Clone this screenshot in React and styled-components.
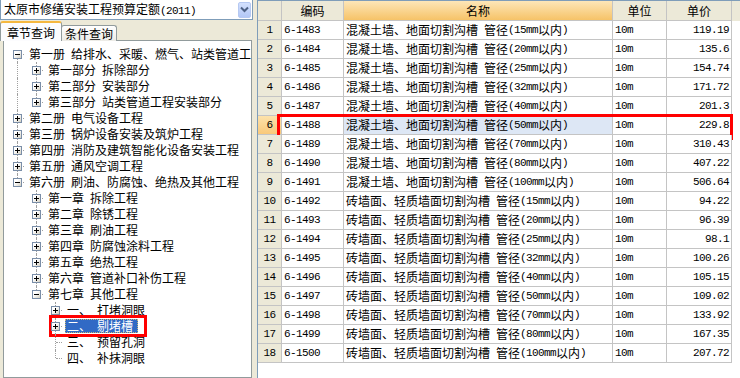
import React from "react";
import styled, { createGlobalStyle, css } from "styled-components";

//Data
const tree = [
	{
		no: "第一册",
		title: "给排水、采暖、燃气、站类管道工程",
		open: true,
		children: [
			{ no: "第一部分", title: "拆除部分", children: [] },
			{ no: "第二部分", title: "安装部分", children: [] },
			{ no: "第三部分", title: "站类管道工程安装部分", children: [] },
		],
	},
	{ no: "第二册", title: "电气设备工程", children: [] },
	{ no: "第三册", title: "锅炉设备安装及筑炉工程", children: [] },
	{ no: "第四册", title: "消防及建筑智能化设备安装工程", children: [] },
	{ no: "第五册", title: "通风空调工程", children: [] },
	{
		no: "第六册",
		title: "刷油、防腐蚀、绝热及其他工程",
		open: true,
		children: [
			{ no: "第一章", title: "拆除工程", children: [] },
			{ no: "第二章", title: "除锈工程", children: [] },
			{ no: "第三章", title: "刷油工程", children: [] },
			{ no: "第四章", title: "防腐蚀涂料工程", children: [] },
			{ no: "第五章", title: "绝热工程", children: [] },
			{ no: "第六章", title: "管道补口补伤工程", children: [] },
			{
				no: "第七章",
				title: "其他工程",
				open: true,
				children: [
					{ no: "一、", title: "打堵洞眼", children: [] },
					{ no: "二、", title: "剔堵槽", children: [], selected: true },
					{ no: "三、", title: "预留孔洞" },
					{ no: "四、", title: "补抹洞眼" },
				],
			},
		],
	},
];

const concrete = "混凝土墙、地面切割沟槽 管径";
const brick = "砖墙面、轻质墙面切割沟槽 管径";
const items = [
	["6-1483", concrete, 15, "119.19"],
	["6-1484", concrete, 20, "135.6"],
	["6-1485", concrete, 25, "154.74"],
	["6-1486", concrete, 32, "171.72"],
	["6-1487", concrete, 40, "201.3"],
	["6-1488", concrete, 50, "229.8"],
	["6-1489", concrete, 70, "310.43"],
	["6-1490", concrete, 80, "407.22"],
	["6-1491", concrete, 100, "506.64"],
	["6-1492", brick, 15, "94.22"],
	["6-1493", brick, 20, "96.39"],
	["6-1494", brick, 25, "98.1"],
	["6-1495", brick, 32, "100.26"],
	["6-1496", brick, 40, "105.15"],
	["6-1497", brick, 50, "109.02"],
	["6-1498", brick, 70, "133.92"],
	["6-1499", brick, 80, "167.35"],
	["6-1500", brick, 100, "207.72"],
];

//flatten the tree with the dotted-line flags
function flatten(nodes, depth = 0, guides = [], out = []) {
	nodes.forEach((node, i) => {
		const hasNext = i < nodes.length - 1;
		out.push({
			...node,
			depth,
			guides,
			hasNext,
			up: depth > 0 || i > 0,
		});
		if (node.open && node.children) {
			flatten(node.children, depth + 1, [...guides, hasNext], out);
		}
	});
	return out;
}

//ascii runs get the narrow mono face (like SimSun half width)
function mixed(text) {
	return text
		.split(/([\x20-\x7e]+)/)
		.filter(Boolean)
		.map((part, i) =>
			/^[\x20-\x7e]+$/.test(part) ? (
				<Latin key={i}>{part}</Latin>
			) : (
				<React.Fragment key={i}>{part}</React.Fragment>
			)
		);
}

const App = () => {
	const rows = flatten(tree);
	return (
		<>
			<GlobalStyle />
			<Window>
				<LeftPanel>
					<Combo>
						<ComboText>{mixed("太原市修缮安装工程预算定额(2011)")}</ComboText>
						<ComboButton>
							<svg width="11" height="11" viewBox="0 0 11 11">
								<path d="M2 3.5 L5.5 7 L9 3.5" fill="none" stroke="#4d6185" strokeWidth="2" />
							</svg>
						</ComboButton>
					</Combo>
					<Tabs>
						<Tab $active>章节查询</Tab>
						<Tab>条件查询</Tab>
					</Tabs>
					<TreeBox>
						{rows.map((row, i) => (
							<TreeRow key={i}>
								{row.guides.map((g, j) => (
									<Guide key={j} $line={g} />
								))}
								<Joint $up={row.up} $down={row.hasNext}>
									{row.children && <Expander $closed={!row.open} />}
								</Joint>
								<Label $selected={row.selected}>
									<span>{row.no}</span>
									<span>{row.title}</span>
								</Label>
								{row.selected && <TreeMark />}
							</TreeRow>
						))}
					</TreeBox>
				</LeftPanel>
				<Splitter />
				<GridArea>
					<HeaderRow>
						<HeadCell />
						<HeadCell>编码</HeadCell>
						<HeadCell $sorted>名称</HeadCell>
						<HeadCell>单位</HeadCell>
						<HeadCell>单价</HeadCell>
					</HeaderRow>
					{items.map(([code, name, size, price], i) => {
						const selected = i === 5;
						return (
							<GridRow key={code}>
								<RowNo $selected={selected}>
									<Latin>{i + 1}</Latin>
								</RowNo>
								<Cell>
									<Latin>{code}</Latin>
								</Cell>
								<Cell $selected={selected}>{mixed(`${name}(${size}mm以内)`)}</Cell>
								<Cell>
									<Latin>10m</Latin>
								</Cell>
								<Cell $right>
									<Latin>{price}</Latin>
								</Cell>
								{selected && <GridMark />}
							</GridRow>
						);
					})}
				</GridArea>
			</Window>
		</>
	);
};

//Style
const GlobalStyle = createGlobalStyle`
	html, body {
		margin: 0;
		padding: 0;
		background: #ece9d8;
	}
	body {
		font-family: "Noto Sans CJK SC", "Liberation Sans", sans-serif;
		font-size: 12px;
		color: #000;
	}
`;

const Latin = styled.span`
	font-family: "Liberation Mono", monospace;
	font-size: 11px;
	letter-spacing: -0.6px;
	white-space: pre;
`;

const Window = styled.div`
	display: flex;
	width: 740px;
	height: 378px;
	overflow: hidden;
	background: #ece9d8;
`;

const LeftPanel = styled.div`
	width: 253px;
	flex-shrink: 0;
	display: flex;
	flex-direction: column;
`;

const Combo = styled.div`
	height: 20px;
	box-sizing: border-box;
	display: flex;
	align-items: center;
	justify-content: space-between;
	padding: 0 1px 0 3px;
	background: #fff;
	border: 1px solid #7f9db9;
	border-top: none;
`;

const ComboText = styled.span`
	line-height: 16px;
	white-space: nowrap;
`;

const ComboButton = styled.span`
	width: 13px;
	height: 16px;
	box-sizing: border-box;
	display: flex;
	align-items: center;
	justify-content: center;
	border: 1px solid #b6c9f2;
	border-radius: 2px;
	background: linear-gradient(#d3e0fd, #b3c8f6);
`;

const Tabs = styled.div`
	height: 21px;
	display: flex;
	align-items: flex-end;
	position: relative;
	z-index: 1;
	margin-bottom: -1px;
`;

const Tab = styled.div`
	box-sizing: border-box;
	display: flex;
	align-items: center;
	justify-content: center;
	line-height: 14px;
	border: 1px solid #919b9c;
	border-bottom: none;
	border-radius: 3px 3px 0 0;
	${(p) =>
		p.$active
			? css`
					width: 62px;
					height: 20px;
					padding-top: 1px;
					background: #fcfcfe;
					border-top: 2px solid #f5b840;
			  `
			: css`
					width: 56px;
					height: 16px;
					margin-left: -1px;
					padding-top: 1px;
					background: linear-gradient(#ffffff, #ecebe6);
			  `}
`;

const TreeBox = styled.div`
	flex: 1;
	margin: 0 1px 0 3px;
	padding: 5px 0 0 1px;
	background: #fff;
	border: 1px solid #919b9c;
	overflow: hidden;
`;

const TreeRow = styled.div`
	position: relative;
	display: flex;
	align-items: center;
	height: 16px;
	white-space: nowrap;
`;

const Guide = styled.span`
	position: relative;
	flex: 0 0 19px;
	height: 16px;
	${(p) =>
		p.$line &&
		css`
			&::before {
				content: "";
				position: absolute;
				left: 12px;
				top: 0;
				bottom: 0;
				border-left: 1px dotted #a0a0a0;
			}
		`}
`;

const Joint = styled.span`
	position: relative;
	flex: 0 0 19px;
	height: 16px;
	&::before {
		content: "";
		position: absolute;
		left: 12px;
		top: ${(p) => (p.$up ? 0 : 8)}px;
		bottom: ${(p) => (p.$down ? 0 : 8)}px;
		border-left: 1px dotted #a0a0a0;
	}
	&::after {
		content: "";
		position: absolute;
		left: 13px;
		right: 0;
		top: 8px;
		border-top: 1px dotted #a0a0a0;
	}
`;

const Expander = styled.span`
	position: absolute;
	left: 8px;
	top: 4px;
	width: 9px;
	height: 9px;
	box-sizing: border-box;
	z-index: 1;
	border: 1px solid #7a8ea8;
	background: linear-gradient(135deg, #ffffff 35%, #d4d0c2);
	&::before {
		content: "";
		position: absolute;
		left: 1px;
		top: 3px;
		width: 5px;
		height: 1px;
		background: #000;
	}
	${(p) =>
		p.$closed &&
		css`
			&::after {
				content: "";
				position: absolute;
				left: 3px;
				top: 1px;
				width: 1px;
				height: 5px;
				background: #000;
			}
		`}
`;

const Label = styled.span`
	display: inline-flex;
	gap: 6px;
	height: 14px;
	line-height: 14px;
	margin-left: 3px;
	padding: 0 5px 0 2px;
	${(p) =>
		p.$selected &&
		css`
			background: #316ac5;
			color: #fff;
			outline: 1px dotted #c9b87a;
			outline-offset: -1px;
		`}
`;

const TreeMark = styled.span`
	position: absolute;
	left: 44px;
	top: -3px;
	width: 98px;
	height: 22px;
	box-sizing: border-box;
	border: 3px solid #f00;
	pointer-events: none;
`;

const Splitter = styled.div`
	width: 4px;
	flex-shrink: 0;
`;

const GridArea = styled.div`
	flex: 1;
	background: #fff;
	border-top: 1px solid #7f9db9;
	border-left: 1px solid #7f9db9;
`;

const columns = "24px 62px 269px 54px 65px";

const HeaderRow = styled.div`
	display: grid;
	grid-template-columns: ${columns};
	height: 20px;
	background: #ece9d8;
`;

const HeadCell = styled.div`
	box-sizing: border-box;
	display: flex;
	align-items: center;
	justify-content: center;
	line-height: 14px;
	border-right: 1px solid #c4c4c4;
	border-bottom: 1px solid #c4c4c4;
	background: ${(p) => (p.$sorted ? "linear-gradient(#fde6b8, #f6c368)" : "#ece9d8")};
`;

const GridRow = styled.div`
	position: relative;
	display: grid;
	grid-template-columns: ${columns};
	height: 19px;
`;

const Cell = styled.div`
	box-sizing: border-box;
	display: flex;
	align-items: center;
	justify-content: ${(p) => (p.$right ? "flex-end" : "flex-start")};
	padding: 0 2px 0 2px;
	line-height: 14px;
	white-space: nowrap;
	overflow: hidden;
	border-right: 1px solid #c4c4c4;
	border-bottom: 1px solid #c4c4c4;
	background: ${(p) => (p.$selected ? "#dde7f5" : "#fff")};
`;

const RowNo = styled(Cell)`
	justify-content: center;
	padding: 0;
	background: ${(p) => (p.$selected ? "linear-gradient(#fde2ab, #f9c97a)" : "#ece9d8")};
`;

const GridMark = styled.span`
	position: absolute;
	left: 19px;
	top: -2px;
	width: 456px;
	height: 26px;
	box-sizing: border-box;
	border: 3px solid #f00;
	pointer-events: none;
`;

export default App;
